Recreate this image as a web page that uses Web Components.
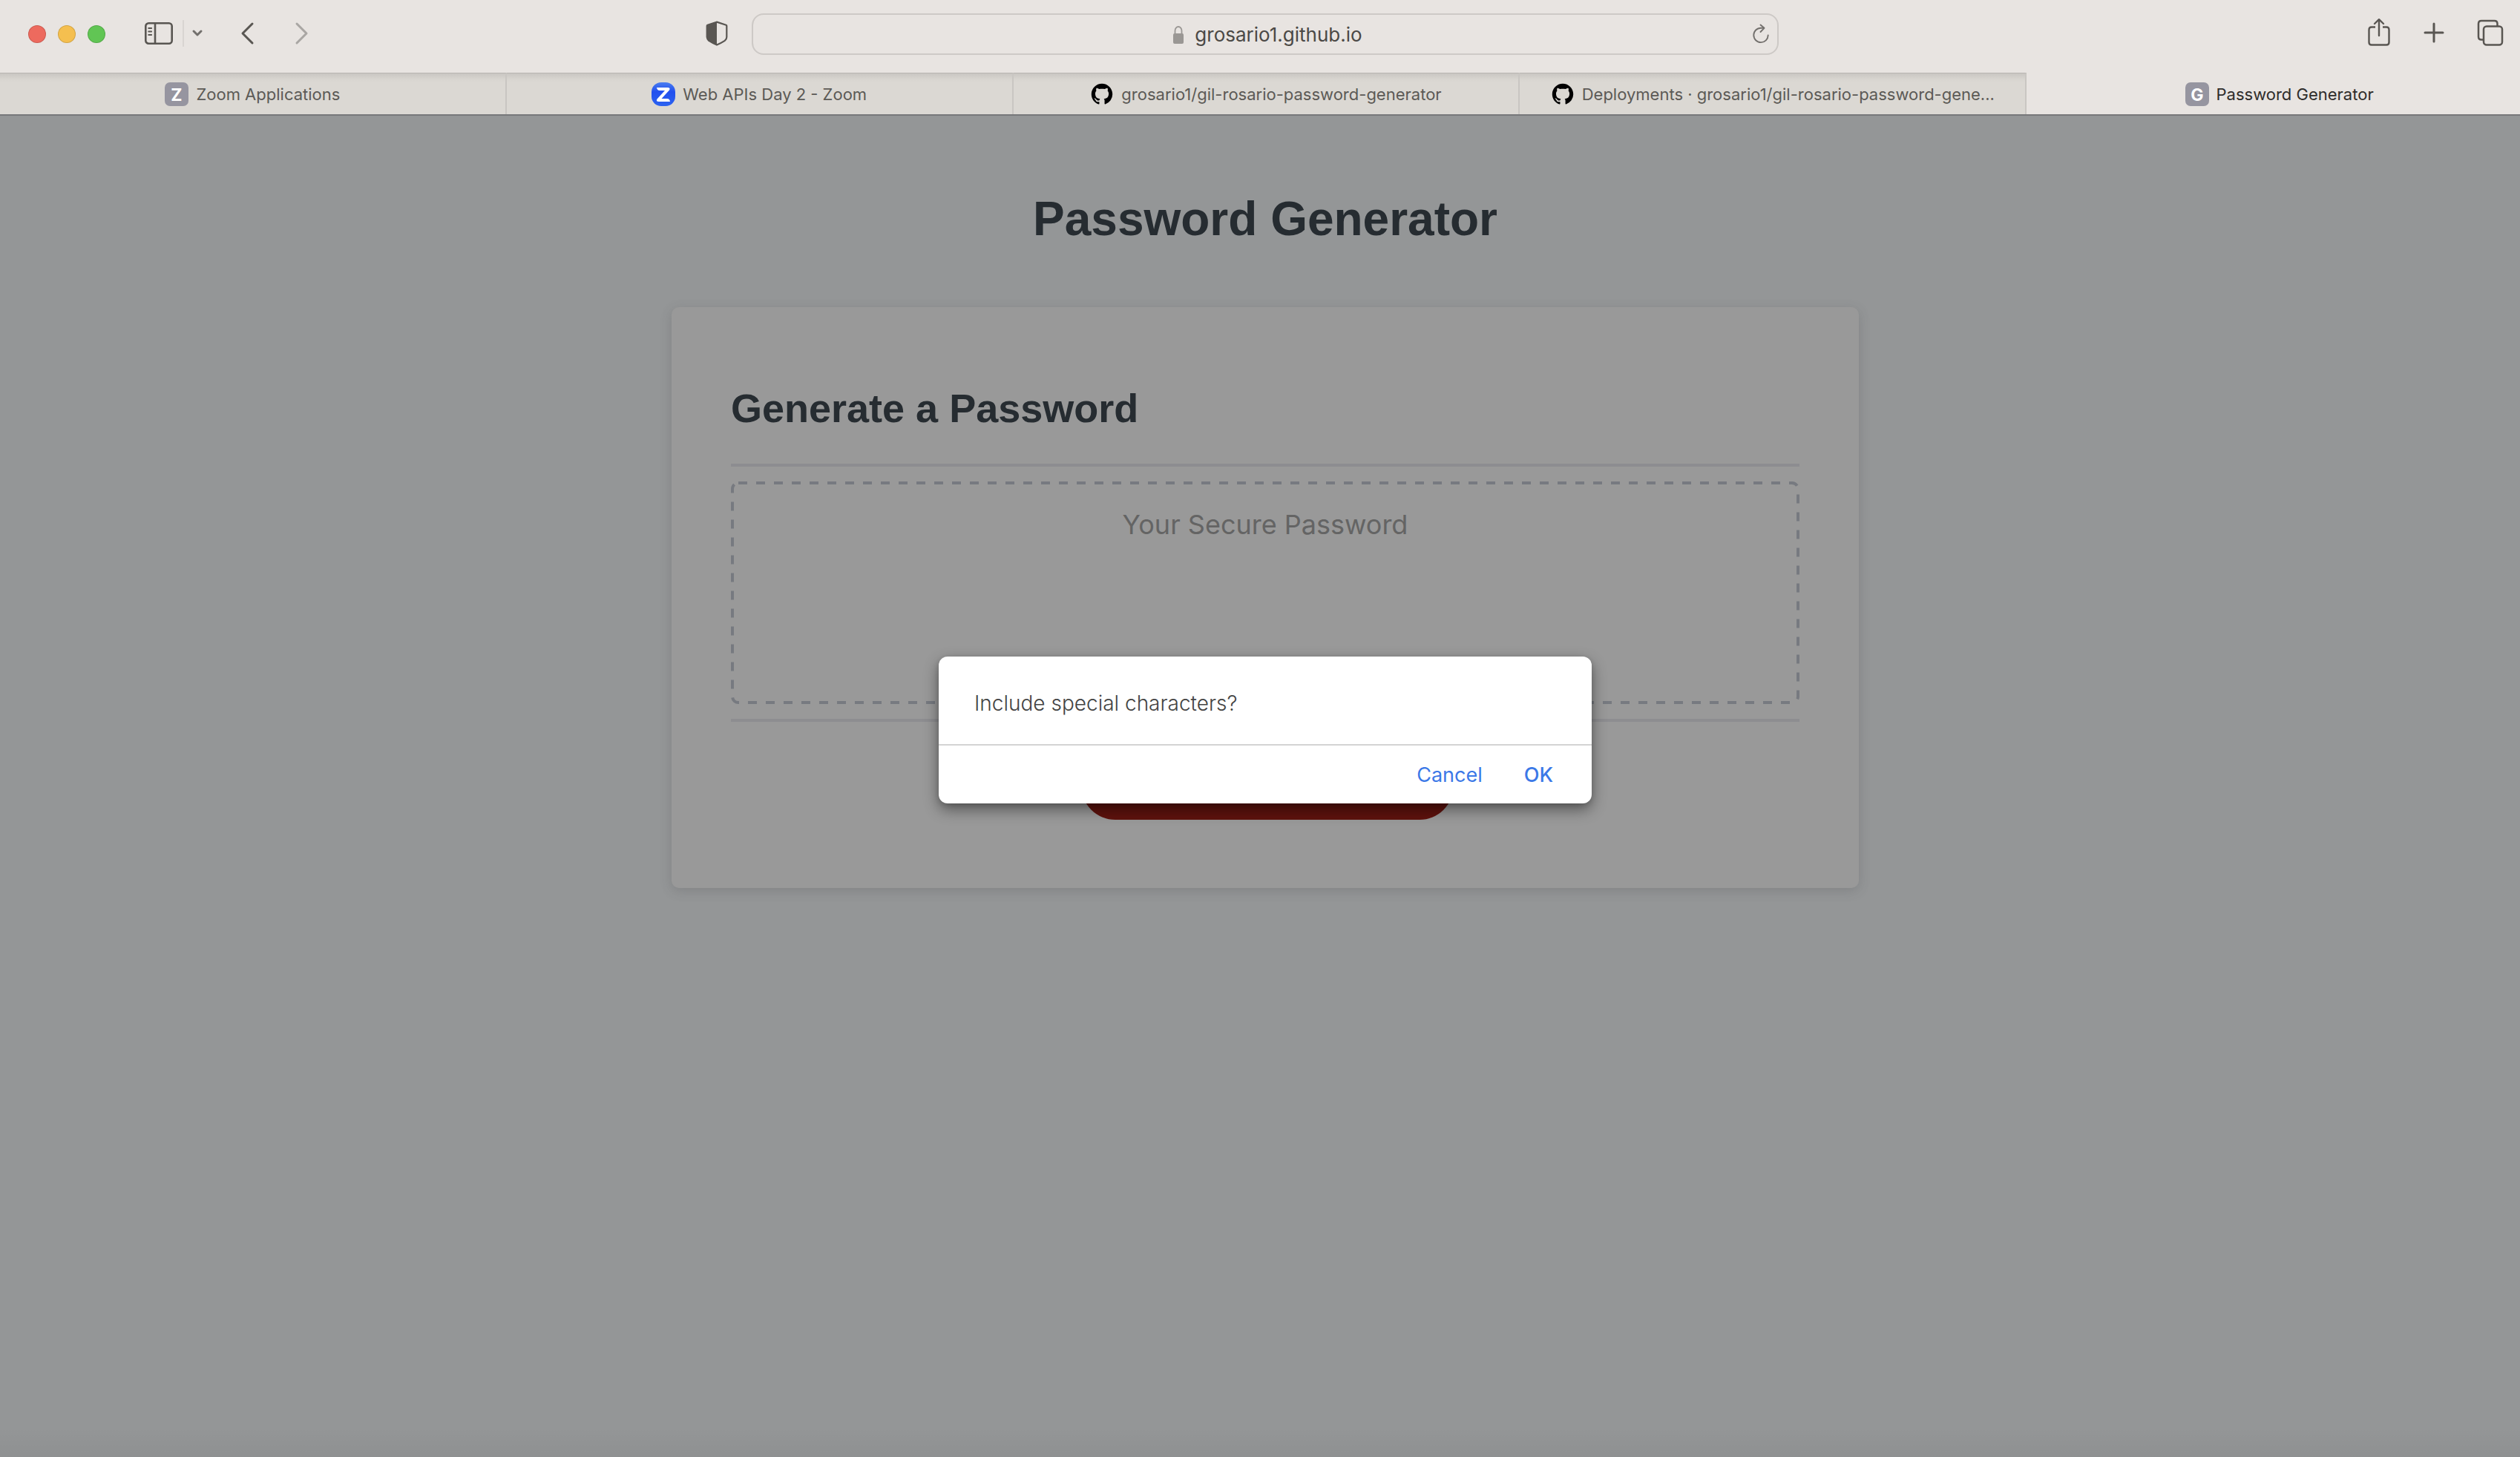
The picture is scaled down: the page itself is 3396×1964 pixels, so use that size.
<!DOCTYPE html>
<html lang="en">
<head>
<meta charset="utf-8">
<title>Password Generator</title>
<style>
html,body{height:100%;margin:0}
body{overflow:hidden;background:#949697;font-family:Inter,"Liberation Sans",sans-serif}
</style>
</head>
<body>
<browser-window>
  <browser-toolbar slot="toolbar" address="grosario1.github.io"></browser-toolbar>
  <tab-strip slot="tabs">
    <browser-tab icon="letter" letter="Z">Zoom Applications</browser-tab>
    <browser-tab icon="zoom">Web APIs Day 2 - Zoom</browser-tab>
    <browser-tab icon="github">grosario1/gil-rosario-password-generator</browser-tab>
    <browser-tab icon="github">Deployments · grosario1/gil-rosario-password-gene...</browser-tab>
    <browser-tab icon="letter" letter="G" active>Password Generator</browser-tab>
  </tab-strip>
  <password-page></password-page>
  <confirm-dialog slot="dialog">Include special characters?</confirm-dialog>
</browser-window>
<script>
const define = (name, html, setup) => customElements.define(name, class extends HTMLElement {
  constructor() {
    super();
    this.attachShadow({mode: "open"}).innerHTML = html;
  }
  connectedCallback() { if (setup) setup(this, this.shadowRoot); }
});

const buttonReset = `button{appearance:none;border:0;padding:0;margin:0;background:none;font:inherit;color:inherit;display:flex;align-items:center;justify-content:center}svg{display:block}`;

define("browser-window", `
<style>
/* the window runs slightly past the right edge of the screen */
:host{display:flex;flex-direction:column;width:calc(100% + 14px);height:100%}
.view{flex:1;position:relative;background:#949697;display:flex;flex-direction:column}
.view::after{content:"";position:absolute;inset:auto 0 0 0;height:40px;background:linear-gradient(transparent,rgba(0,0,0,.04))}
.layer{position:absolute;z-index:1;top:729px;left:0;right:0;display:flex;justify-content:center}
</style>
<slot name="toolbar"></slot>
<slot name="tabs"></slot>
<div class="view"><slot></slot><div class="layer"><slot name="dialog"></slot></div></div>`);

define("browser-toolbar", `
<style>
${buttonReset}
:host{display:grid;grid-template-columns:1fr 1384px 1fr;align-items:center;height:98px;box-sizing:border-box;padding-bottom:6px;background:#e8e4e1;color:#595652}
.left,.right{display:flex;align-items:center}
.left{padding-left:38px}
.lights{display:flex;gap:16px}
.lights i{width:24px;height:24px;box-sizing:border-box;border-radius:50%;border:1px solid rgba(0,0,0,.14)}
.tools{flex:1;display:flex;align-items:center;padding-bottom:2px}
.side{margin-left:52px}
.rule{width:2px;height:36px;background:#d9d5d2;margin-left:12px}
.menu{margin-left:10px}
.back{margin-left:50px}
.fwd{margin-left:52px;color:#a9a6a3}
.shield{margin-left:auto;margin-right:32px}
.bar{height:56px;box-sizing:border-box;border:2px solid #cdc9c6;border-radius:16px;display:grid;grid-template-columns:1fr auto 1fr;align-items:center}
.addr{grid-column:2;display:flex;align-items:center;gap:14px;padding:2px 0 0 6px;color:#4b4946}
.addr input{appearance:none;border:0;background:none;padding:0;outline:0;font:26px/32px Inter,sans-serif;color:inherit;field-sizing:content}
.reload{justify-self:end;margin-right:8px;color:#73706d}
.right{justify-content:flex-end;gap:44px;padding:0 36px 4px 0}
</style>
<div class="left">
  <div class="lights"><i style="background:#ed6a5e"></i><i style="background:#f5bf4f"></i><i style="background:#61c554"></i></div>
  <div class="tools">
  <button class="side" aria-label="Sidebar"><svg width="40" height="32" viewBox="0 0 40 32" fill="none" stroke="currentColor" stroke-width="2.6" stroke-linecap="round"><rect x="2.3" y="2.3" width="35.4" height="27.4" rx="4"/><path d="M15 2.3v27.4"/><path stroke-width="1.8" d="M6.2 9h4M6.2 13.5h4M6.2 18h4"/></svg></button>
  <span class="rule"></span>
  <button class="menu" aria-label="Tab groups"><svg width="16" height="12" viewBox="0 0 16 12" fill="none" stroke="#73706d" stroke-width="3" stroke-linecap="round" stroke-linejoin="round"><path d="M3 3l5 5 5-5"/></svg></button>
  <button class="back" aria-label="Back"><svg width="20" height="32" viewBox="0 0 20 32" fill="none" stroke="currentColor" stroke-width="3" stroke-linecap="round" stroke-linejoin="round"><path d="M16 3L3 16l13 13"/></svg></button>
  <button class="fwd" aria-label="Forward"><svg width="20" height="32" viewBox="0 0 20 32" fill="none" stroke="currentColor" stroke-width="3" stroke-linecap="round" stroke-linejoin="round"><path d="M4 3l13 13L4 29"/></svg></button>
  <button class="shield" aria-label="Privacy report"><svg width="30" height="34" viewBox="0 0 30 34"><path d="M15 1.6L27.5 5.8q.8.3.8 1.2v15c0 2-1 3.7-2.6 4.9Q21 30 15 32.5 9 30 4.3 26.9 1.7 24 1.7 22V7q0-.9.8-1.2z" fill="none" stroke="currentColor" stroke-width="2.2"/><path d="M15 1.6L2 6v16q0 3 3 5 5 4 10 5.6z" fill="currentColor"/></svg></button>
  </div>
</div>
<div class="bar">
  <label class="addr"><svg width="16" height="26" viewBox="0 0 16 26"><rect x="1" y="11" width="14" height="14" rx="2" fill="#9a9794"/><path d="M3.5 12V7.5a4.5 5.5 0 0 1 9 0V12" fill="none" stroke="#9a9794" stroke-width="1.8"/></svg><input aria-label="Address" readonly></label>
  <button class="reload" aria-label="Reload"><svg width="28" height="28" viewBox="0 0 28 28" fill="none" stroke="currentColor" stroke-width="1.9" stroke-linecap="round" stroke-linejoin="round"><path d="M23.7 15.5a9.7 9.7 0 1 1-9.7-9.8h4"/><path d="M13.5 1.5l5 4.3-5 5.2"/></svg></button>
</div>
<div class="right">
  <button aria-label="Share"><svg width="32" height="40" viewBox="0 0 32 40" fill="none" stroke="currentColor" stroke-width="2.4" stroke-linecap="round" stroke-linejoin="round"><path stroke-linecap="butt" d="M11 12.5H6q-3.5 0-3.5 3.5v17q0 3.5 3.5 3.5h20q3.5 0 3.5-3.5V16q0-3.5-3.5-3.5h-5"/><path d="M16 24V2.5M10 8L16 2.2 22 8"/></svg></button>
  <button aria-label="New tab"><svg width="28" height="28" viewBox="0 0 28 28" stroke="currentColor" stroke-width="3" stroke-linecap="round"><path d="M14 2v24M2 14h24"/></svg></button>
  <button aria-label="Tab overview"><svg width="36" height="36" viewBox="0 0 36 36" fill="none" stroke="currentColor" stroke-width="2.5"><path d="M9 27.5H6q-4 0-4-4V6q0-4 4-4h17.5q4 0 4 4v3"/><rect x="9" y="9.5" width="25" height="25" rx="4"/></svg></button>
</div>`, (el, root) => { root.querySelector("input").value = el.getAttribute("address"); });

define("tab-strip", `
<style>
:host{display:grid;grid-auto-flow:column;grid-auto-columns:minmax(0,1fr);height:58px;box-sizing:border-box;margin-right:-4px;border-bottom:2px solid #77787a}
</style><slot></slot>`);

const tabIcons = {
  letter: `<svg width="32" height="32" viewBox="0 0 32 32"><rect width="32" height="32" rx="7" fill="#9695a0"/><text x="16" y="25" text-anchor="middle" font-family="Inter" font-weight="700" font-size="23" fill="#fff"></text></svg>`,
  zoom: `<svg width="32" height="32" viewBox="0 0 32 32"><defs><linearGradient id="g" x1="0" y1="0" x2="0" y2="1"><stop stop-color="#4a7df0"/><stop offset=".4" stop-color="#2250ee"/><stop offset="1" stop-color="#2b62f0"/></linearGradient></defs><rect width="32" height="32" rx="13" fill="url(#g)"/><path d="M7 7h14.5q4.500 0 2.500 3.500L13.500 22H21q3.500 0 4 4H10q-4.500 0-2.500-3.500L18 11h-7q-3.500 0-4-4z" fill="#fff"/></svg>`,
  github: `<svg width="32" height="32" viewBox="-1 -1 18 18"><path fill="#000" d="M8 0C3.58 0 0 3.58 0 8c0 3.54 2.29 6.53 5.47 7.59.4.07.55-.17.55-.38 0-.19-.01-.82-.01-1.49-2.01.37-2.53-.49-2.69-.94-.09-.23-.48-.94-.82-1.13-.28-.15-.68-.52-.01-.53.63-.01 1.08.58 1.23.82.72 1.21 1.87.87 2.33.66.07-.52.28-.87.51-1.07-1.78-.2-3.64-.89-3.64-3.95 0-.87.31-1.59.82-2.15-.08-.2-.36-1.02.08-2.12 0 0 .67-.21 2.2.82.64-.18 1.32-.27 2-.27s1.36.09 2 .27c1.53-1.04 2.2-.82 2.2-.82.44 1.1.16 1.92.08 2.12.51.56.82 1.27.82 2.15 0 3.07-1.87 3.75-3.65 3.95.29.25.54.73.54 1.48 0 1.07-.01 1.93-.01 2.2 0 .21.15.46.55.38A8.01 8.01 0 0 0 16 8c0-4.42-3.58-8-8-8z"/></svg>`
};
define("browser-tab", `
<style>
${buttonReset}
:host{display:flex;background:linear-gradient(#c9c6c2,#d8d5d0 8px,#dbd8d3 12px);border-top:1px solid #b8b5b1;border-right:2px solid #c9c6c2;color:#5c5a56}
:host([active]){background:#e8e4e1;border-color:#e8e4e1;color:#2f2d2b}
button{flex:1;gap:10px;min-width:0;font:22px/28px Inter,sans-serif;white-space:nowrap}
</style><button><span class="icon"></span><span><slot></slot></span></button>`, (el, root) => {
  const icon = root.querySelector(".icon");
  icon.innerHTML = tabIcons[el.getAttribute("icon")];
  if (el.hasAttribute("letter")) icon.querySelector("text").textContent = el.getAttribute("letter");
});

define("password-page", `
<style>
${buttonReset}
:host{display:block;font-family:"Liberation Sans",sans-serif;color:#262c31}
header{padding:99px 40px 0;text-align:center}
h1{margin:0;font-size:64px;line-height:80px}
main{box-sizing:border-box;max-width:1600px;margin:79px auto 0;padding:92px 80px;background:#999;border-radius:10px;box-shadow:0 4px 16px rgba(60,60,65,.2)}
h2{margin:0;font-size:54px;line-height:88px}
.body{margin-top:31px;padding:20px 0;border:solid #8d8d90;border-width:4px 0}
.field{display:grid}
.field>*{grid-area:1/1;box-sizing:border-box;width:100%;height:300px}
.field rect{x:2px;y:2px;width:calc(100% - 4px);height:calc(100% - 4px);rx:8px}
textarea{display:block;margin:0;padding:32px;border:0;background:none;resize:none;outline:0;overflow:hidden;text-align:center;font:36px/52px Inter,sans-serif;color:#666}
textarea::placeholder{color:#646464;opacity:1}
footer{display:flex;justify-content:center;padding:40px 0 0 6px}
.go{width:502px;height:92px;border-radius:50px;background:#5e120d}
</style>
<header><h1>Password Generator</h1></header>
<main>
  <h2>Generate a Password</h2>
  <div class="body"><div class="field">
    <svg aria-hidden="true"><rect fill="none" stroke="#777a80" stroke-width="4" stroke-dasharray="12 12"/></svg>
    <textarea readonly placeholder="Your Secure Password" aria-label="Your Secure Password"></textarea>
  </div></div>
  <footer><button class="go" aria-label="Generate Password"></button></footer>
</main>`);

define("confirm-dialog", `
<style>
${buttonReset}
:host{display:block;width:880px;background:#fff;border-radius:12px;box-shadow:0 8px 20px rgba(0,0,0,.45),0 2px 6px rgba(0,0,0,.12);font:300 28px/36px Inter,sans-serif;color:#444}
p{margin:0;padding:45px 48px 37px}
.actions{display:flex;justify-content:flex-end;gap:56px;padding:22px 52px 20px;border-top:2px solid #d3d3d3;color:#3b78e7}
.actions button{font-size:27px;font-weight:400}
.actions .ok{font-weight:500}
</style>
<p><slot></slot></p>
<div class="actions"><button>Cancel</button><button class="ok">OK</button></div>`);
</script>
</body>
</html>
